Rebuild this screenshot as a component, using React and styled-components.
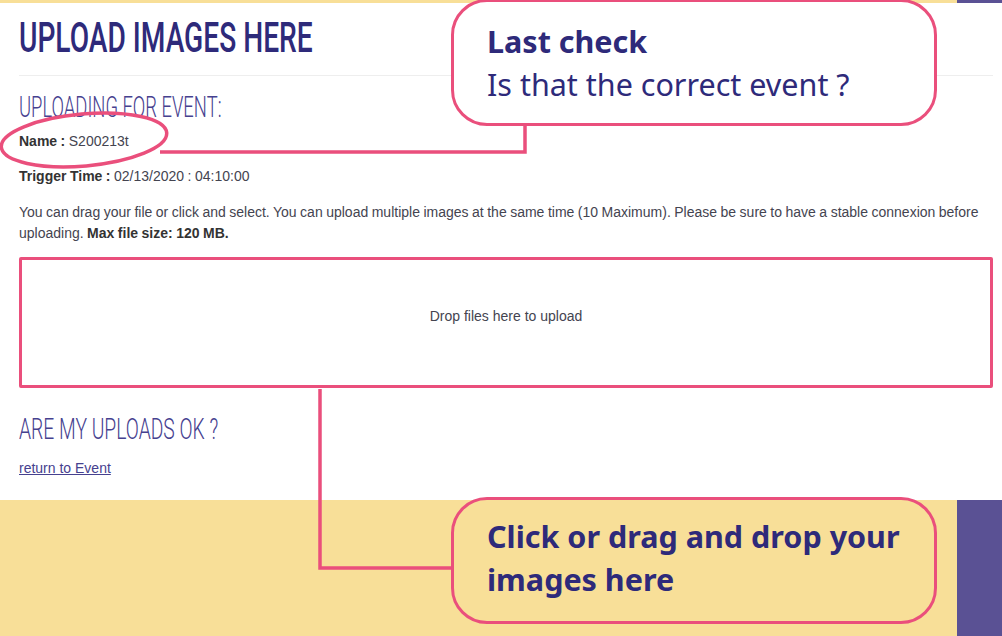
import React from 'react';
import styled, { createGlobalStyle } from 'styled-components';

const GlobalStyle = createGlobalStyle`
    html, body {
        margin: 0;
        padding: 0;
        background: #ffffff;
    }
    * {
        box-sizing: border-box;
    }
`;

const colors = {
    yellow: '#f8df98',
    purple: '#5a5194',
    navy: '#2e2a7a',
    heading: '#46418f',
    pink: '#ea4f7c',
    text: '#444450',
    strong: '#333333',
    rule: '#eeeeee',
};

const Page = styled.div`
    position: relative;
    width: 1002px;
    height: 636px;
    overflow: hidden;
    display: flex;
    flex-direction: column;
    background: #ffffff;
    font-family: "Liberation Sans", Arial, sans-serif;
`;

const Band = styled.div`
    display: flex;
    height: ${props => props.$height};
    flex: ${props => props.$grow ? '1' : 'none'};
`;

const BandFill = styled.div`
    flex: 1;
    background: ${colors.yellow};
`;

const BandSide = styled.div`
    width: 45px;
    background: ${colors.purple};
`;

const Main = styled.main`
    padding: 0 9px 0 19px;
    height: 497px;
`;

const Title = styled.h1`
    margin: 0;
    padding-top: 10px;
    height: 73px;
    border-bottom: 1px solid ${colors.rule};
    font-family: "Roboto", "DejaVu Sans", sans-serif;
    font-weight: 500;
    font-size: 42px;
    line-height: 50px;
    color: ${colors.navy};
    white-space: nowrap;

    span {
        display: inline-block;
        transform: scaleX(0.67);
        transform-origin: left center;
    }
`;

const SubHeading = styled.h2`
    margin: ${props => props.$margin};
    font-family: "Roboto", "DejaVu Sans", sans-serif;
    font-weight: 300;
    font-size: 29px;
    line-height: 34px;
    color: ${colors.heading};
    white-space: nowrap;

    span {
        display: inline-block;
        transform: scaleX(${props => props.$squeeze});
        transform-origin: left center;
    }
`;

const Info = styled.p`
    margin: ${props => props.$margin};
    font-size: 14px;
    line-height: 21px;
    word-spacing: -0.4px;
    color: ${colors.text};

    b {
        font-weight: bold;
        color: ${colors.strong};
    }
`;

const DropZone = styled.div`
    margin-top: 13px;
    height: 131px;
    padding-top: 47px;
    border: 3px solid ${colors.pink};
    border-radius: 2px;
    display: flex;
    justify-content: center;
    font-size: 14px;
    line-height: 18px;
    color: ${colors.text};
    cursor: pointer;
`;

const BackLink = styled.a`
    display: inline-block;
    margin-top: 13px;
    font-size: 14px;
    line-height: 18px;
    color: ${colors.heading};
    text-decoration: underline;
`;

const Overlay = styled.svg`
    position: absolute;
    left: 0;
    top: 0;
    pointer-events: none;
`;

const Callout = styled.div`
    position: absolute;
    left: ${props => props.$left}px;
    top: ${props => props.$top}px;
    width: 486px;
    height: 127px;
    padding: ${props => props.$padding};
    border: 3px solid ${colors.pink};
    border-radius: 36px;
    background: ${props => props.$fill};
    font-family: "Noto Sans", "Open Sans", sans-serif;
    font-size: 30.5px;
    line-height: 43px;
    color: ${colors.navy};
`;

const CalloutLine = styled.div`
    font-weight: ${props => props.$bold ? 700 : 400};
    white-space: nowrap;
`;

export default function App() {
    return (
        <Page>
            <GlobalStyle />
            <Band $height="3px">
                <BandFill />
                <BandSide />
            </Band>

            <Main>
                <Title><span>UPLOAD IMAGES HERE</span></Title>
                <SubHeading $margin="14px 0 0" $squeeze={0.635}><span>UPLOADING FOR EVENT:</span></SubHeading>
                <Info $margin="7px 0 0"><b>Name :</b> S200213t</Info>
                <Info $margin="14px 0 0"><b>Trigger Time :</b> 02/13/2020 : 04:10:00</Info>
                <Info $margin="15px 0 0">
                    <span>You can drag your file or click and select. You can upload multiple images at the same time (10 Maximum). Please be sure to have a stable connexion before uploading. </span>
                    <b>Max file size: 120 MB.</b>
                </Info>
                <DropZone>Drop files here to upload</DropZone>
                <SubHeading $margin="24px 0 0" $squeeze={0.665}><span>ARE MY UPLOADS OK ?</span></SubHeading>
                <BackLink href="#">return to Event</BackLink>
            </Main>

            <Band $grow>
                <BandFill />
                <BandSide />
            </Band>

            <Overlay width="1002" height="636" viewBox="0 0 1002 636">
                <g fill="none" stroke={colors.pink} strokeWidth="3.5">
                    <path d="M525 126 V152 H160" />
                    <ellipse cx="84" cy="140" rx="83" ry="26" transform="rotate(-5 84 140)" />
                    <path d="M320 389 V568 H452" />
                </g>
            </Overlay>

            <Callout $left={451} $top={-1} $fill="#ffffff" $padding="18px 0 0 33px">
                <CalloutLine $bold>Last check</CalloutLine>
                <CalloutLine>Is that the correct event ?</CalloutLine>
            </Callout>
            <Callout $left={451} $top={497} $fill={colors.yellow} $padding="15px 0 0 33px">
                <CalloutLine $bold>Click or drag and drop your</CalloutLine>
                <CalloutLine $bold>images here</CalloutLine>
            </Callout>
        </Page>
    );
}
